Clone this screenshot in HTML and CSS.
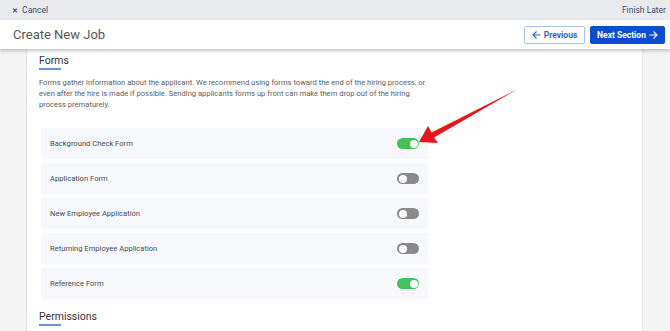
FILE: index.html
```html
<!DOCTYPE html>
<html lang="en">
<head>
  <meta charset="UTF-8" />
  <meta name="viewport" content="width=device-width, initial-scale=1" />
  <title>Create New Job</title>
  <link rel="stylesheet" href="styles.css">
</head>
<body>
  <div class="topbar">
    <a class="cancel" href="#"><span class="x">&#x2715;</span> Cancel</a>
    <a class="later" href="#">Finish Later</a>
  </div>

  <div class="header">
    <h1>Create New Job</h1>
    <div class="actions">
      <button class="btn prev">
        <svg width="9" height="8" viewBox="0 0 9 8"><path d="M8.5 4H1M4.5 0.5L1 4l3.5 3.5" fill="none" stroke="currentColor" stroke-width="1.1"/></svg>
        Previous
      </button>
      <button class="btn next">
        Next Section
        <svg width="9" height="8" viewBox="0 0 9 8"><path d="M0.5 4H8M4.5 0.5L8 4l-3.5 3.5" fill="none" stroke="currentColor" stroke-width="1.1"/></svg>
      </button>
    </div>
  </div>

  <div class="main">
    <div class="card">
      <h2 class="section-title">Forms</h2>
      <p class="intro">Forms gather information about the applicant. We recommend using forms toward the end of the hiring process, or even after the hire is made if possible. Sending applicants forms up front can make them drop out of the hiring process prematurely.</p>

      <div class="form-list">
        <div class="form-row"><span>Background Check Form</span><span class="toggle on"></span></div>
        <div class="form-row"><span>Application Form</span><span class="toggle"></span></div>
        <div class="form-row"><span>New Employee Application</span><span class="toggle"></span></div>
        <div class="form-row"><span>Returning Employee Application</span><span class="toggle"></span></div>
        <div class="form-row"><span>Reference Form</span><span class="toggle on"></span></div>
      </div>

      <h2 class="section-title perms">Permissions</h2>
    </div>
  </div>

  <svg class="arrow" width="670" height="331" viewBox="0 0 670 331">
    <polygon points="419,142 428,126 431.5,132.5 518,89 434,137.5 438,143" fill="#e8161c"/>
  </svg>
</body>
</html>
```

FILE: styles.css
```css
body {
  margin: 0;
  font-family: Roboto, "Noto Sans", sans-serif;
  background: #f4f4f5;
  width: 670px;
  height: 331px;
  overflow: hidden;
}
a {
  text-decoration: none;
}
.topbar {
  height: 20px;
  background: #e8eaee;
  display: flex;
  align-items: center;
  justify-content: space-between;
  padding: 0 4px 0 12px;
  font-size: 8.5px;
}
.topbar a {
  color: #3d4c6e;
}
.cancel .x {
  font-size: 7px;
  font-weight: 700;
  margin-right: 2px;
}
.header {
  height: 29px;
  background: #fff;
  display: flex;
  align-items: center;
  justify-content: space-between;
  padding: 0 5px 0 13px;
  box-shadow: 0 2px 3px rgba(0, 0, 0, 0.22);
  position: relative;
  z-index: 2;
}
h1 {
  margin: 0;
  font-size: 13px;
  font-weight: 400;
  color: #555;
}
.actions {
  display: flex;
  gap: 5px;
}
.btn {
  height: 18px;
  border-radius: 2px;
  font-family: inherit;
  font-size: 8.5px;
  font-weight: 700;
  display: flex;
  align-items: center;
  gap: 3px;
  cursor: pointer;
}
.btn.prev {
  width: 61px;
  justify-content: center;
  background: #fff;
  color: #2f64cc;
  border: 1px solid #a9c0ec;
}
.btn.next {
  width: 75px;
  justify-content: center;
  background: #0b4fd0;
  color: #fff;
  border: 1px solid #0b4fd0;
}
.main {
  padding: 0 27px 0 26px;
}
.card {
  background: #fff;
  border-left: 1px solid #e4e4e4;
  border-right: 1px solid #e8e8e8;
  height: 282px;
  padding: 0 0 0 12px;
  box-sizing: border-box;
}
.section-title {
  margin: 0;
  font-size: 10.5px;
  line-height: 12px;
  font-weight: 400;
  color: #333;
  display: inline-block;
  padding-bottom: 2px;
  position: relative;
}
.section-title::after {
  content: "";
  position: absolute;
  left: 0;
  bottom: -1px;
  width: 22px;
  height: 2px;
  background: #6a90e2;
}
.intro {
  width: 392px;
  margin: 8px 0 0;
  font-size: 7.6px;
  line-height: 11px;
  color: #5c5c5c;
}
.form-list {
  margin: 18px 0 0 2px;
  width: 387px;
  display: flex;
  flex-direction: column;
  gap: 4px;
}
.form-row {
  height: 31px;
  background: #f7f8fc;
  display: flex;
  align-items: center;
  justify-content: space-between;
  padding: 0 9px;
  font-size: 7.6px;
  color: #4a4a4a;
}
.toggle {
  width: 22px;
  height: 11px;
  border-radius: 6px;
  background: #8a8a8a;
  position: relative;
}
.toggle::after {
  content: "";
  position: absolute;
  top: 1.5px;
  left: 1.5px;
  width: 8px;
  height: 8px;
  border-radius: 50%;
  background: #fff;
}
.toggle.on {
  background: #43c15a;
}
.toggle.on::after {
  left: 12.5px;
}
.perms {
  margin-top: 12px;
}
.arrow {
  position: absolute;
  left: 0;
  top: 0;
  pointer-events: none;
  z-index: 3;
}
```
